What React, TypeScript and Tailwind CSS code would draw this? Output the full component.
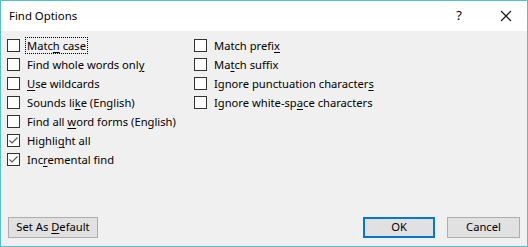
import React from 'react';

const font = { fontFamily: '"Noto Sans", "Open Sans", sans-serif' };

type Opt = { pre: string; key: string; post: string; checked?: boolean; focus?: boolean };

const left: Opt[] = [
  { pre: 'Matc', key: 'h', post: ' case', focus: true },
  { pre: 'Find whole words onl', key: 'y', post: '' },
  { pre: '', key: 'U', post: 'se wildcards' },
  { pre: 'Sounds li', key: 'k', post: 'e (English)' },
  { pre: 'Find all ', key: 'w', post: 'ord forms (English)' },
  { pre: 'Highli', key: 'g', post: 'ht all', checked: true },
  { pre: 'Inc', key: 'r', post: 'emental find', checked: true },
];

const right: Opt[] = [
  { pre: 'Match prefi', key: 'x', post: '' },
  { pre: 'Ma', key: 't', post: 'ch suffix' },
  { pre: 'Ignore punctuation character', key: 's', post: '' },
  { pre: 'Ignore white-sp', key: 'a', post: 'ce characters' },
];

const Check: React.FC<{ opt: Opt }> = ({ opt }) => (
  <div className="flex h-[19px] items-center">
    <div className="flex h-[13px] w-[13px] items-center justify-center border border-[#333333] bg-white">
      {opt.checked && (
        <svg width="11" height="11" viewBox="0 0 11 11">
          <path d="M1.5 5.5 L4 8 L9.5 2.5" fill="none" stroke="#555" strokeWidth="1.1" />
        </svg>
      )}
    </div>
    <span
      className={
        'ml-[6px] px-[1px] text-[11.2px] leading-[15px] text-black ' +
        (opt.focus ? 'outline outline-1 outline-dotted outline-black' : '')
      }
    >
      {opt.pre}
      <span className="underline underline-offset-2">{opt.key}</span>
      {opt.post}
    </span>
  </div>
);

export default function App() {
  return (
    <div
      className="flex h-[247px] w-[528px] flex-col border border-[#4ec4ca] bg-[#f0f0f0]"
      style={font}
    >
      <div className="flex h-[30px] items-center bg-white pl-[8px] pr-[15px] text-[11.4px] text-black">
        <span className="flex-1">Find Options</span>
        <span className="mr-[38px] text-[13px]">?</span>
        <svg width="12" height="12" viewBox="0 0 12 12">
          <path d="M1 1 L11 11 M11 1 L1 11" stroke="#111" strokeWidth="1.1" />
        </svg>
      </div>
      <div className="flex flex-1 flex-col pl-[6px] pr-[7px] pt-[5px] pb-[8px]">
        <div className="flex flex-1">
          <div className="flex w-[187px] flex-col">
            {left.map((o, i) => (
              <Check key={i} opt={o} />
            ))}
          </div>
          <div className="flex flex-col">
            {right.map((o, i) => (
              <Check key={i} opt={o} />
            ))}
          </div>
        </div>
        <div className="flex items-center text-[11.2px] text-black">
          <button className="ml-[1px] h-[21px] w-[90px] border border-[#adadad] bg-[#e1e1e1]">
            Set As <span className="underline underline-offset-2">D</span>efault
          </button>
          <div className="flex-1" />
          <button className="h-[21px] w-[72px] border-2 border-[#0078d7] bg-[#e1e1e1]">OK</button>
          <button className="ml-[12px] h-[21px] w-[73px] border border-[#adadad] bg-[#e1e1e1]">
            Cancel
          </button>
        </div>
      </div>
    </div>
  );
}
